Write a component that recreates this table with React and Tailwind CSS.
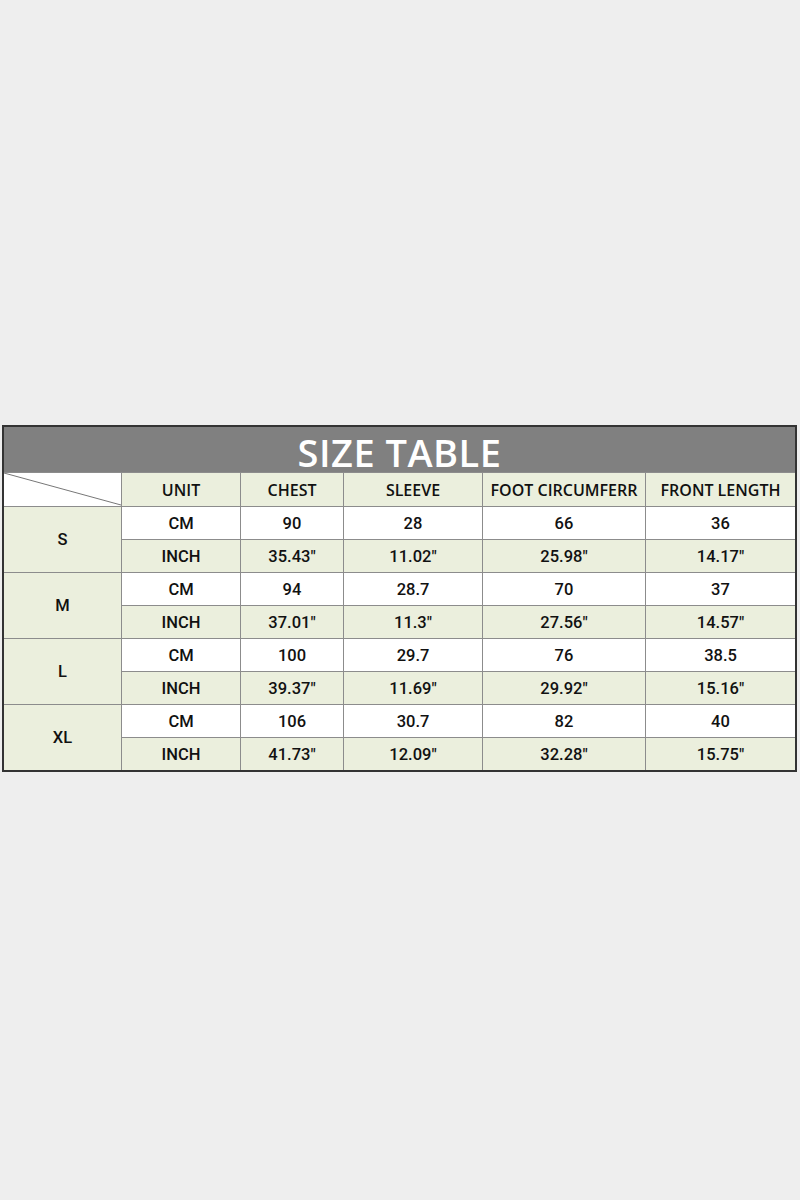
import React from 'react';

const cols = ['UNIT', 'CHEST', 'SLEEVE', 'FOOT CIRCUMFERR', 'FRONT LENGTH'];

const sizes = [
  { name: 'S', cm: ['90', '28', '66', '36'], inch: ['35.43"', '11.02"', '25.98"', '14.17"'] },
  { name: 'M', cm: ['94', '28.7', '70', '37'], inch: ['37.01"', '11.3"', '27.56"', '14.57"'] },
  { name: 'L', cm: ['100', '29.7', '76', '38.5'], inch: ['39.37"', '11.69"', '29.92"', '15.16"'] },
  { name: 'XL', cm: ['106', '30.7', '82', '40'], inch: ['41.73"', '12.09"', '32.28"', '15.75"'] },
];

const green = 'bg-[#ebefdd]';

// body cells use an Arial-like face, header row uses Open Sans
const Cell = ({ children, bg = 'bg-white', className = '' }) => (
  <div className={`${bg} flex items-center justify-center pt-[2px] text-[16.5px] text-[#111] font-medium font-['Roboto',sans-serif] ${className}`}>
    {children}
  </div>
);

const Head = ({ children }) => (
  <div className={`${green} flex items-center justify-center text-[16px] text-[#111] font-semibold font-['Open_Sans',sans-serif]`}>
    {children}
  </div>
);

const App = () => {
  return (
    <div className="min-h-[1200px] bg-[#eeeeee] pt-[425px] font-['Open_Sans',sans-serif]">
      <div className="ml-[2px] w-[795px] border-2 border-[#333333] bg-[#8c8c8c]">
        <div className="h-[45px] bg-[#808080] flex items-center justify-center">
          <span className="text-white text-[38px] font-semibold leading-none pt-[4px] tracking-[0.5px]">SIZE TABLE</span>
        </div>
        <div className="grid grid-cols-[117px_118px_102px_138px_162px_149px] grid-rows-[33px_repeat(8,32px)] gap-px pt-px">
          <div className="bg-white relative">
            <svg className="absolute inset-0" width="117" height="33" viewBox="0 0 117 33">
              <line x1="0" y1="0" x2="117" y2="32" stroke="#777" strokeWidth="1" />
            </svg>
          </div>
          {cols.map((c) => (
            <Head key={c}>{c}</Head>
          ))}
          {sizes.map((s) => (
            <React.Fragment key={s.name}>
              <Cell bg={green} className="row-span-2">{s.name}</Cell>
              <Cell>CM</Cell>
              {s.cm.map((v, i) => (
                <Cell key={'c' + i}>{v}</Cell>
              ))}
              <Cell bg={green}>INCH</Cell>
              {s.inch.map((v, i) => (
                <Cell key={'i' + i} bg={green}>{v}</Cell>
              ))}
            </React.Fragment>
          ))}
        </div>
      </div>
    </div>
  );
};

export default App;
